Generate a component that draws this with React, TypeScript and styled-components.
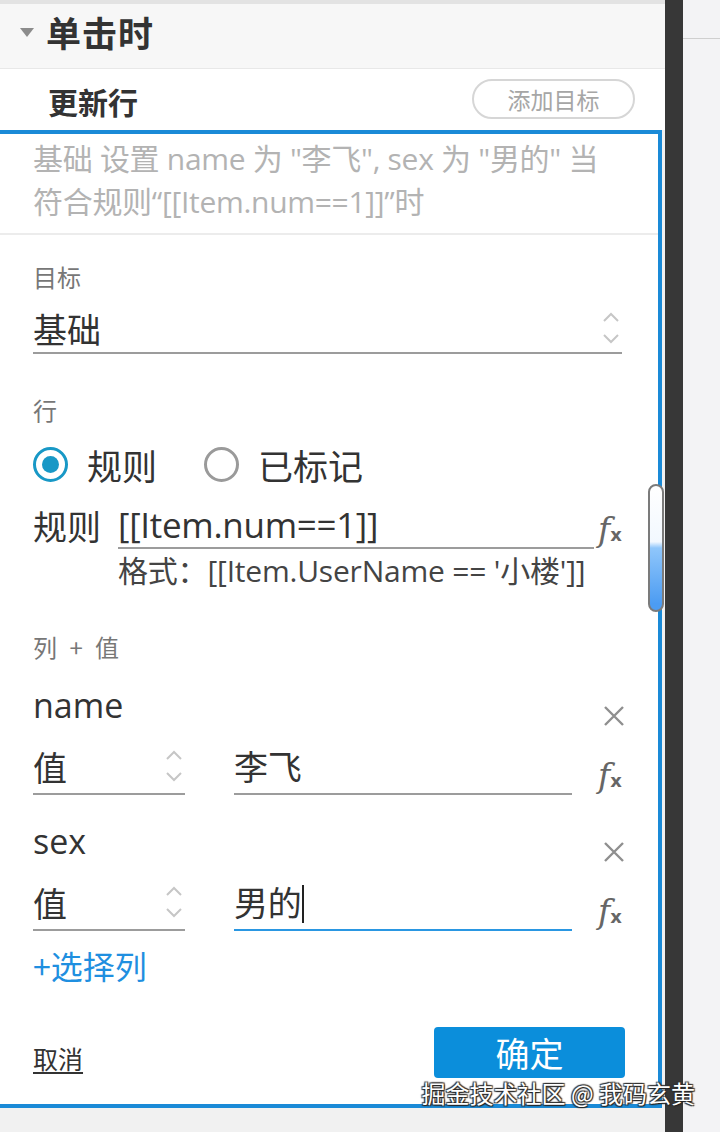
import React from "react";
import styled, { createGlobalStyle } from "styled-components";

const GlobalStyle = createGlobalStyle`
  html, body { margin: 0; padding: 0; }
  body {
    background: #f2f2f4;
    font-family: "Open Sans", "Noto Sans CJK SC", sans-serif;
    color: #333;
  }
`;

const Screen = styled.div`
  display: flex;
  width: 720px;
  height: 1132px;
  overflow: hidden;
`;

const Panel = styled.div`
  position: relative;
  width: 665px;
  display: flex;
  flex-direction: column;
  background: #f1f1f1;
`;

const TopStrip = styled.div`
  height: 4px;
  background: #e3e3e3;
`;

const SectionHeader = styled.div`
  height: 65px;
  box-sizing: border-box;
  display: flex;
  align-items: center;
  padding: 0 0 10px 20px;
  gap: 12px;
  background: #f7f7f7;
  border-bottom: 1px solid #e8e8e8;
`;

const Caret = styled.span`
  width: 0;
  height: 0;
  border-left: 7px solid transparent;
  border-right: 7px solid transparent;
  border-top: 9px solid #8c8c8c;
  margin-top: 2px;
`;

const SectionTitle = styled.div`
  font-family: "Noto Sans CJK SC", sans-serif;
  font-size: 35px;
  font-weight: 700;
  color: #333;
  letter-spacing: 1px;
`;

const ActionRow = styled.div`
  height: 61px;
  display: flex;
  align-items: center;
  justify-content: space-between;
  padding: 0 30px 0 48px;
  background: #fff;
`;

const ActionTitle = styled.div`
  font-family: "Noto Sans CJK SC", sans-serif;
  font-size: 30px;
  font-weight: 700;
  color: #333;
  margin-top: 2px;
`;

const PillButton = styled.button`
  width: 163px;
  height: 40px;
  border: 2px solid #d6d6d6;
  border-radius: 20px;
  background: #fff;
  color: #a6a6a6;
  font-family: "Noto Sans CJK SC", sans-serif;
  font-size: 23px;
  padding: 0;
  margin-top: -1px;
`;

const EditorBox = styled.div`
  width: 662px;
  box-sizing: border-box;
  border: 4px solid #1a8ad7;
  border-left: none;
  background: #fff;
  display: flex;
  flex-direction: column;
`;

const Description = styled.div`
  padding: 3px 10px 10px 33px;
  font-size: 30px;
  line-height: 43px;
  letter-spacing: -0.3px;
  color: #b3b3b3;
  white-space: nowrap;
  border-bottom: 2px solid #ececec;
`;

const Form = styled.div`
  display: flex;
  flex-direction: column;
  padding: 27px 36px 26px 33px;
`;

const FieldLabel = styled.div<{ $top?: number }>`
  font-family: "Noto Sans CJK SC", sans-serif;
  font-size: 24px;
  line-height: 30px;
  color: #777;
  white-space: pre;
  word-spacing: 7px;
  margin-top: ${(p) => p.$top ?? 0}px;
`;

const SelectBox = styled.div<{ $width?: number }>`
  position: relative;
  display: flex;
  align-items: center;
  justify-content: space-between;
  height: 52px;
  width: ${(p) => (p.$width ? `${p.$width}px` : "auto")};
  border-bottom: 2px solid #9c9c9c;
  font-family: "Noto Sans CJK SC", sans-serif;
  font-size: 34px;
  color: #333;
  box-sizing: border-box;
`;

const TargetSelect = styled(SelectBox)`
  margin-top: 12px;
  height: 50px;
`;

const Stepper = styled.svg`
  width: 22px;
  height: 38px;
  flex: none;
`;

const RadioRow = styled.div`
  display: flex;
  align-items: center;
  height: 44px;
  margin-top: 17px;
  gap: 47px;
`;

const RadioItem = styled.label`
  display: flex;
  align-items: center;
  gap: 19px;
  font-family: "Noto Sans CJK SC", sans-serif;
  font-size: 35px;
  color: #333;
`;

const RadioCircle = styled.span<{ $checked?: boolean }>`
  width: 35px;
  height: 35px;
  box-sizing: border-box;
  border-radius: 50%;
  border: 3px solid ${(p) => (p.$checked ? "#1898c6" : "#9a9a9a")};
  display: flex;
  align-items: center;
  justify-content: center;
  &::after {
    content: "";
    width: 17px;
    height: 17px;
    border-radius: 50%;
    background: ${(p) => (p.$checked ? "#1898c6" : "transparent")};
  }
`;

const RuleRow = styled.div`
  display: flex;
  align-items: flex-end;
  margin-top: 17px;
`;

const RuleLabel = styled.div`
  width: 85px;
  font-family: "Noto Sans CJK SC", sans-serif;
  font-size: 34px;
  line-height: 46px;
  color: #333;
  align-self: flex-start;
`;

const TextInput = styled.div<{ $active?: boolean; $width?: number }>`
  height: 46px;
  width: ${(p) => (p.$width ? `${p.$width}px` : "auto")};
  flex: ${(p) => (p.$width ? "none" : "1")};
  box-sizing: border-box;
  border-bottom: 2px solid ${(p) => (p.$active ? "#2a97e2" : "#9c9c9c")};
  font-size: 35px;
  line-height: 44px;
  letter-spacing: -0.3px;
  color: #333;
  white-space: nowrap;
`;

const Caret2 = styled.span`
  display: inline-block;
  width: 2px;
  height: 38px;
  background: #222;
  vertical-align: -7px;
  margin-left: 1px;
`;

const FxIcon = styled.span`
  width: 32px;
  margin: 0 -8px 0 4px;
  display: inline-flex;
  align-items: baseline;
  color: #666;
  flex: none;
  i {
    font-family: "DejaVu Serif", serif;
    font-style: italic;
    font-size: 33px;
  }
  b {
    font-family: "DejaVu Sans", sans-serif;
    font-size: 18px;
    font-weight: 700;
    margin-left: 0;
  }
`;

const Hint = styled.div`
  margin: 3px 0 0 85px;
  font-size: 30px;
  line-height: 38px;
  letter-spacing: -0.2px;
  color: #444;
  white-space: nowrap;
`;

const NameRow = styled.div<{ $top: number }>`
  display: flex;
  justify-content: space-between;
  align-items: flex-end;
  margin-top: ${(p) => p.$top}px;
  height: 40px;
  font-size: 34px;
  line-height: 40px;
  color: #333;
`;

const CloseIcon = styled.svg`
  width: 22px;
  height: 22px;
  margin-right: -3px;
  margin-bottom: -2px;
`;

const ValueRow = styled.div`
  display: flex;
  align-items: flex-end;
  margin-top: 14px;
  gap: 49px;
`;

const ValueCell = styled.div`
  flex: 1;
  display: flex;
  align-items: flex-end;
`;

const ValueInput = styled(TextInput)`
  height: 56px;
  line-height: 54px;
  font-family: "Noto Sans CJK SC", sans-serif;
  font-size: 34px;
  margin-right: 22px;
`;

const ValueSelect = styled(SelectBox)`
  height: 56px;
`;

const AddColumn = styled.div`
  margin-top: 14px;
  font-family: "Noto Sans CJK SC", sans-serif;
  font-size: 32px;
  line-height: 40px;
  color: #1f8fe0;
`;

const Footer = styled.div`
  display: flex;
  justify-content: space-between;
  align-items: flex-end;
  margin-top: 42px;
`;

const CancelLink = styled.a`
  font-family: "Noto Sans CJK SC", sans-serif;
  font-size: 25px;
  line-height: 36px;
  color: #333;
  text-decoration: underline;
  text-underline-offset: 3px;
  margin-bottom: 2px;
`;

const PrimaryButton = styled.button`
  width: 191px;
  height: 51px;
  margin-right: -3px;
  border: none;
  border-radius: 4px;
  background: #0b8edb;
  color: #fff;
  font-family: "Noto Sans CJK SC", sans-serif;
  font-size: 34px;
  padding: 0;
`;

const ScrollThumb = styled.div`
  position: absolute;
  left: 648px;
  top: 484px;
  width: 16px;
  height: 128px;
  box-sizing: border-box;
  border: 2px solid #7b7b7b;
  border-radius: 8px;
  background: linear-gradient(
    to bottom,
    #ffffff 0%,
    #f2f8ff 45%,
    #8fc6fb 50%,
    #4c9cf2 95%
  );
`;

const Watermark = styled.div`
  position: absolute;
  right: -30px;
  bottom: 24px;
  font-family: "Noto Sans CJK SC", sans-serif;
  font-size: 24px;
  line-height: 30px;
  color: #fff;
  white-space: nowrap;
  text-shadow: 1px 1px 1px #222, -1px -1px 1px #333, 1px -1px 1px #333,
    -1px 1px 1px #333;
`;

const Divider = styled.div`
  width: 18px;
  background: #373737;
`;

const RightArea = styled.div`
  flex: 1;
  background: #f3f3f5;
`;

const RightTop = styled.div`
  height: 38px;
  border-bottom: 1px solid #cfcfcf;
`;

const Chevrons = () => (
  <Stepper viewBox="0 0 22 38">
    <path d="M4 12 L11 5 L18 12" fill="none" stroke="#c6c6c6" strokeWidth="2" />
    <path d="M4 26 L11 33 L18 26" fill="none" stroke="#c6c6c6" strokeWidth="2" />
  </Stepper>
);

const Fx = () => (
  <FxIcon>
    <i>f</i>
    <b>x</b>
  </FxIcon>
);

const Close = () => (
  <CloseIcon viewBox="0 0 22 22">
    <path d="M2 2 L20 20 M20 2 L2 20" stroke="#8f8f8f" strokeWidth="2.4" />
  </CloseIcon>
);

const rows = [
  { name: "name", value: "李飞", active: false, top: 23 },
  { name: "sex", value: "男的", active: true, top: 26 },
];

export default function App() {
  return (
    <>
      <GlobalStyle />
      <Screen>
        <Panel>
          <TopStrip />
          <SectionHeader>
            <Caret />
            <SectionTitle>单击时</SectionTitle>
          </SectionHeader>
          <ActionRow>
            <ActionTitle>更新行</ActionTitle>
            <PillButton>添加目标</PillButton>
          </ActionRow>
          <EditorBox>
            <Description>
              基础 设置 name 为 "李飞", sex 为 "男的" 当
              <br />
              符合规则“[[Item.num==1]]”时
            </Description>
            <Form>
              <FieldLabel>目标</FieldLabel>
              <TargetSelect>
                <span>基础</span>
                <Chevrons />
              </TargetSelect>

              <FieldLabel $top={41}>行</FieldLabel>
              <RadioRow>
                <RadioItem>
                  <RadioCircle $checked />
                  规则
                </RadioItem>
                <RadioItem>
                  <RadioCircle />
                  已标记
                </RadioItem>
              </RadioRow>

              <RuleRow>
                <RuleLabel>规则</RuleLabel>
                <TextInput>[[Item.num==1]]</TextInput>
                <Fx />
              </RuleRow>
              <Hint>格式：[[Item.UserName == '小楼']]</Hint>

              <FieldLabel $top={42}>列 + 值</FieldLabel>

              {rows.map((r) => (
                <React.Fragment key={r.name}>
                  <NameRow $top={r.top}>
                    <span>{r.name}</span>
                    <Close />
                  </NameRow>
                  <ValueRow>
                    <ValueSelect $width={152}>
                      <span>值</span>
                      <Chevrons />
                    </ValueSelect>
                    <ValueCell>
                      <ValueInput $active={r.active}>
                        {r.value}
                        {r.active && <Caret2 />}
                      </ValueInput>
                      <Fx />
                    </ValueCell>
                  </ValueRow>
                </React.Fragment>
              ))}

              <AddColumn>+选择列</AddColumn>

              <Footer>
                <CancelLink>取消</CancelLink>
                <PrimaryButton>确定</PrimaryButton>
              </Footer>
            </Form>
          </EditorBox>
          <ScrollThumb />
          <Watermark>掘金技术社区 @ 我码玄黄</Watermark>
        </Panel>
        <Divider />
        <RightArea>
          <RightTop />
        </RightArea>
      </Screen>
    </>
  );
}
